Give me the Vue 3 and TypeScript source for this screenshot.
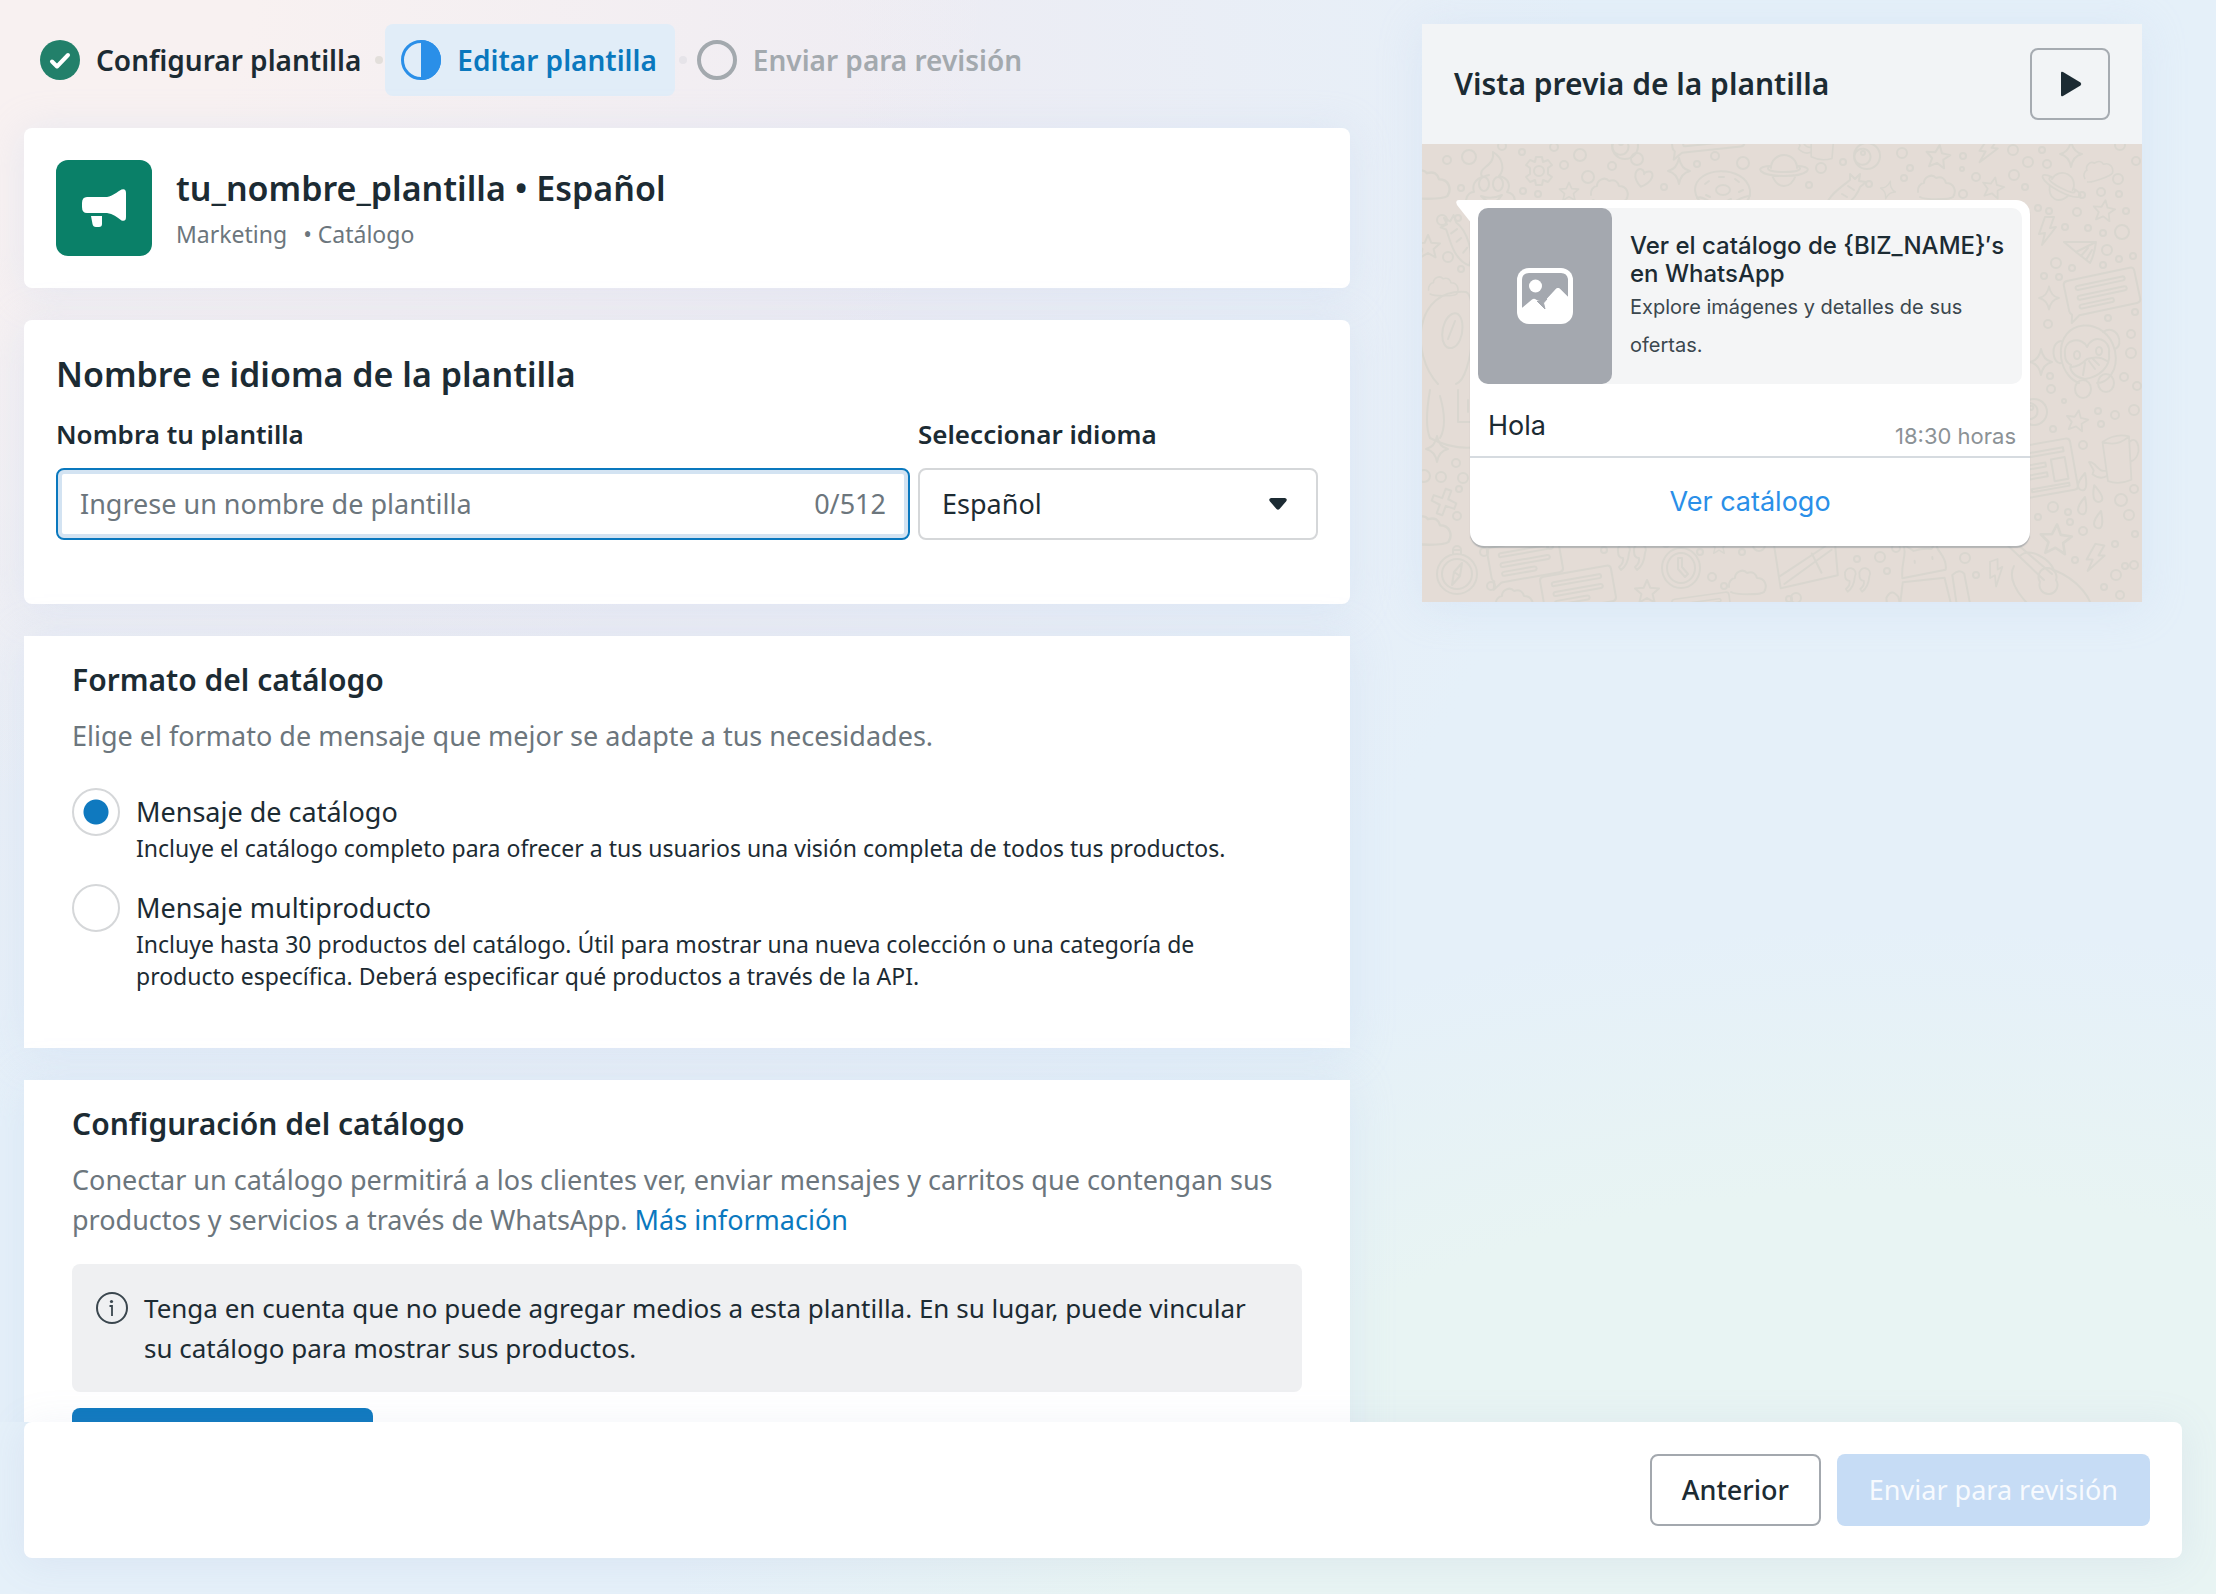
<script setup lang="ts">
import { ref } from 'vue'

type Format = 'catalog' | 'multi'
interface FormatOption { value: Format; label: string; description: string }
interface Doodle { kind: string; x: number; y: number; scale?: number; rotate?: number }

const name = ref('')
const language = ref('es')
const format = ref<Format>('catalog')

const options: FormatOption[] = [
  {
    value: 'catalog',
    label: 'Mensaje de catálogo',
    description: 'Incluye el catálogo completo para ofrecer a tus usuarios una visión completa de todos tus productos.',
  },
  {
    value: 'multi',
    label: 'Mensaje multiproducto',
    description: 'Incluye hasta 30 productos del catálogo. Útil para mostrar una nueva colección o una categoría de producto específica. Deberá especificar qué productos a través de la API.',
  },
]

// Shapes of the chat wallpaper, each drawn around its own origin.
const shapes: Record<string, string> = {
  star: 'M0-12 3.4-4.2 12-3.6 5.6 2 7.6 10.4 0 6-7.6 10.4-5.6 2-12-3.6-3.4-4.2Z',
  sparkle: 'M0-13Q2-2 11 0 2 2 0 13-2 2-11 0-2-2 0-13Z',
  cloud: 'M-18 5C-19 0-15-4-12-4-12-10-4-14 0-9 6-11 9-8 10-4 18-4 21 4 17 10 14 13-12 13-16 10-19 9-18 5Z',
  heart: 'M0 9C-12 1-9-8-4-8-1-8 0-5 0-4 0-5 2-8 5-8 10-8 11 1 0 9Z',
  bolt: 'M-2-14 7-14 3-3 9-4-5 14-2 2-8 3Z',
  planet: 'M-13-3A13 13 0 0 1 13-3M-14-5C-32-4-24 5 0 5 24 5 32-4 14-5M-14-5C-20-1-12 1 0 1 12 1 20-1 14-5M-12 4Q-8 15 0 15 8 15 12 4',
  gear: 'M-3-14H3L4-9 9-11 13-6 9-3V3L13 6 9 11 4 9 3 14H-3L-4 9-9 11-13 6-9 3V-3L-13-6-9-11-4-9ZM-5 0A5 5 0 1 0 5 0 5 5 0 1 0-5 0',
  donut: 'M-28 0C-28-24 22-26 27 0 30 26-26 28-28 0ZM-26 8C-18 4-12 18-2 12 8 18 16 6 27 6M-7 0A7 5 0 1 0 7 0 7 5 0 1 0-7 0M-18-6-14-9M-4-13 1-13M12-11 16-8M16 2 20 0M-17 5-13 7M4 11 8 9',
  poop: 'M-20 24C-30 16-22 8-17 8-20-2-12-6-9-7-14-18 4-16 2-32 12-26 14-14 8-8 18-6 20 2 16 8 26 10 26 22 18 24ZM-12 0A5 7 0 1 0-2 0 5 7 0 1 0-12 0M2 0A5 7 0 1 0 12 0 5 7 0 1 0 2 0M-10 12Q0 16 11 11 2 25-10 12M-9-7-2-9',
  eye: 'M-13 0A13 13 0 1 0 13 0 13 13 0 1 0-13 0M-11-4A8 8 0 1 0 3-2 8 8 0 0 0-11-4M-6-3A2 2 0 1 0-2-3 2 2 0 1 0-6-3',
  bubble: 'M-32-18H32Q36-18 36-14V14Q36 18 32 18H-27L-36 24-34 16Q-36 14-36 12V-14Q-36-18-32-18ZM-25-9Q-25-11-23-11H23Q25-11 25-9T23-7H-23Q-25-7-25-9ZM-25 1Q-25-1-23-1H23Q25-1 25 1T23 3H-23Q-25 3-25 1ZM-25 10Q-25 8-23 8H8Q10 8 10 10T8 12H-23Q-25 12-25 10Z',
  plane: 'M-18-10 14-10Q12 4 8 11L-6 0ZM-6 0 14-10M-1 4 6-4M4 8 10-2',
  comet: 'M-22 20C-22 4-6-6 4-14L4-20 9-15 14-20 13-13 20-12 14-7C10 6-8 20-22 20ZM-12 10-6 12M-4 0 1 3M2-8 8-4',
  compass: 'M-20 0A20 20 0 1 0 20 0 20 20 0 1 0-20 0M-15 0A15 15 0 1 0 15 0 15 15 0 1 0-15 0M5-11-3-2-5 11 3 2ZM-3-2 3 2M-4-20-4-24 4-24 4-20M-4-24A4 4 0 1 1 4-24',
  clock: 'M-19 0A19 20 0 1 0 19 0 19 20 0 1 0-19 0M-14 0A14 15 0 1 0 14 0 14 15 0 1 0-14 0M-3-10V1L4 9 7 6 1-1V-10Z',
  monkey: 'M-26 0C-30-40 20-42 28-6 32 14 20 26 10 26M-26 0C-24 16-14 24-8 26M-26-16C-38-14-34 8-26 6M16-25C30-34 38-12 28-8M-22-2C-24-20-4-20 0-10 6-24 24-18 22-4 24 10 12 20-2 22-14 20-18 12-16 8-20 6-22 2-22-2ZM-13-2A3 4 0 1 0-7-2 3 4 0 1 0-13-2M9-6A3 4 0 1 0 15-6 3 4 0 1 0 9-6M-16 10Q-8 10 0 2 12-2 20 4M-4 18-2 6M2 4 8 12M6 2 12 8M-12 32A8 9 0 1 0 4 32 8 9 0 1 0-12 32M11 26A8 9 0 1 0 27 26 8 9 0 1 0 11 26',
  paper: 'M-28-30H22Q26-30 26-26V18Q26 22 22 22H-34V-8H-28ZM-28-8V16M-20-22H18V-18H-20ZM4-12H18V10H4ZM-20-10H-2V-6H-20ZM-20 0H-2V4H-20ZM-20 14H18V17H-20Z',
  mug: 'M-16-18Q0-26 14-20L10 28Q-4 32-16 26ZM-16-18Q0-10 14-20M14-14C24-22 28 4 12 8M-16 14C-26 16-26 2-34 2L-30 12-32 16Q-24 24-16 20',
  drop: 'M2-9Q5 6 1 8-4 9-5 4-5-1 2-9Z',
  comma: 'M-10-6A6 6 0 1 1 1-4Q0 8-7 13L-9 10Q-4 6-5 1-10 1-10-6ZM6-6A6 6 0 1 1 17-4Q16 8 9 13L7 10Q12 6 11 1 6 1 6-6Z',
  plus: 'M-3-13H3L3-4 12-3V3L3 3V13H-3L-3 4-12 3V-3L-3-3Z',
  astro: 'M-22 50C-50 20-46-46 6-42 18-38 14 44-4 50M-8-20C6-26 6 10-8 14-22 16-20-14-8-20ZM-5-13-12 5M-30 56Q-36 90-30 104 0 120 30 110M-2 56V88H24V72M8 66V78M-20 62Q-12 90-20 104',
  box: 'M-32-30H30V22L-28 30ZM-28 18 20-8M-24 26 26-4M0-30 4-14 12-20M-10-30A9 9 0 0 0 8-30M14 18 6-2',
  android: 'M-32 60-22 16H20L26 60M-22 12C-22-4-14-12-18-22L-8-14Q2-16 10-14L16-22Q14-16 18-10 24 0 22 8ZM-8-4V-2M10-6V-4M-40 60V30Q-34 20-28 30L-24 60M30 60 28 14Q36 8 40 14L44 60',
  spoon: 'M-44-46 0-4M-34-46 8-10M-4-2A9 9 0 1 0 12-4 9 9 0 1 0-4-2M-30-18C-40 0-10 30 4 34M-24-28C-14-38 6-24 10-14 30-6 54 14 48 40',
}

const doodles: Doodle[] = [
  { kind: 'cloud', x: 5, y: 40, scale: 1.2 }, { kind: 'poop', x: 69, y: 40 }, { kind: 'gear', x: 117, y: 27 },
  { kind: 'star', x: 147, y: 48, scale: 0.8 }, { kind: 'cloud', x: 187, y: 46 }, { kind: 'heart', x: 221, y: 34, rotate: 15 },
  { kind: 'sparkle', x: 257, y: 27 }, { kind: 'donut', x: 301, y: 46 }, { kind: 'planet', x: 362, y: 27 },
  { kind: 'eye', x: 203, y: 2 }, { kind: 'comet', x: 424, y: 50 }, { kind: 'eye', x: 445, y: 12 },
  { kind: 'sparkle', x: 466, y: 46, scale: 0.7, rotate: 15 }, { kind: 'star', x: 516, y: 13, rotate: 8 }, { kind: 'cloud', x: 514, y: 43 },
  { kind: 'bolt', x: 566, y: 6, rotate: 15 }, { kind: 'star', x: 571, y: 44, scale: 0.9, rotate: 12 }, { kind: 'sparkle', x: 649, y: 10 },
  { kind: 'planet', x: 639, y: 43, scale: 0.9, rotate: 28 }, { kind: 'cloud', x: 675, y: 26, scale: 0.8, rotate: -20 }, { kind: 'star', x: 682, y: 67, scale: 0.9, rotate: 8 },
  { kind: 'bolt', x: 625, y: 87 }, { kind: 'plane', x: 660, y: 108 }, { kind: 'bubble', x: 680, y: 148, rotate: -12 },
  { kind: 'sparkle', x: 627, y: 154, scale: 0.9 }, { kind: 'cloud', x: 21, y: 142, scale: 0.8 }, { kind: 'comet', x: 36, y: 94, rotate: -70 },
  { kind: 'star', x: 6, y: 103 }, { kind: 'astro', x: 38, y: 190 }, { kind: 'sparkle', x: 15, y: 305 },
  { kind: 'plus', x: 22, y: 358, rotate: 20 }, { kind: 'cloud', x: 6, y: 386, scale: 1.2 }, { kind: 'compass', x: 35, y: 430 },
  { kind: 'bubble', x: 103, y: 416, rotate: -10 }, { kind: 'bubble', x: 156, y: 445, rotate: -10 }, { kind: 'cloud', x: 92, y: 456 },
  { kind: 'comma', x: 206, y: 413 }, { kind: 'star', x: 225, y: 448 }, { kind: 'clock', x: 259, y: 424 },
  { kind: 'star', x: 297, y: 402, scale: 0.7 }, { kind: 'cloud', x: 325, y: 438 }, { kind: 'box', x: 384, y: 412, rotate: -5 },
  { kind: 'comma', x: 432, y: 436, scale: 0.9 }, { kind: 'android', x: 501, y: 420, rotate: -6 }, { kind: 'bolt', x: 574, y: 429, scale: 0.9, rotate: -20 },
  { kind: 'spoon', x: 622, y: 440 }, { kind: 'star', x: 634, y: 396, scale: 1.3, rotate: 4 }, { kind: 'bolt', x: 673, y: 414, rotate: 10 },
  { kind: 'monkey', x: 665, y: 213 }, { kind: 'eye', x: 612, y: 268, rotate: 20 }, { kind: 'sparkle', x: 619, y: 218 },
  { kind: 'star', x: 655, y: 277, scale: 0.9, rotate: 10 }, { kind: 'paper', x: 627, y: 328, rotate: -10 }, { kind: 'mug', x: 697, y: 312, rotate: -8, scale: 0.9 },
  { kind: 'drop', x: 661, y: 338 }, { kind: 'drop', x: 661, y: 362 }, { kind: 'drop', x: 675, y: 350, rotate: -30 }, { kind: 'drop', x: 677, y: 376 },
  { kind: 'bubble', x: 285, y: -12, rotate: -6 }, { kind: 'mug', x: 402, y: -8, scale: 0.8 }, { kind: 'bubble', x: 280, y: 466, rotate: -8, scale: 0.8 },
]

// Loose dots between the shapes: x, y, radius.
const dots: [number, number, number][] = [
  [25, 16, 4], [47, 13, 7], [80, 2, 4], [100, 8, 3], [132, 3, 4], [142, 21, 4], [158, 11, 6], [166, 33, 6], [190, 22, 4], [215, 15, 6],
  [101, 47, 3], [116, 50, 3], [39, 44, 3], [242, 43, 3], [275, 20, 3], [293, 12, 4], [321, 19, 6], [387, 41, 3], [399, 24, 5], [421, 18, 3],
  [447, 40, 3], [480, 9, 5], [482, 34, 3], [488, 24, 3], [541, 12, 3], [591, 6, 5], [606, 18, 5], [592, 31, 5], [554, 33, 4], [603, 43, 3],
  [541, 50, 4], [540, 25, 2], [620, 6, 3], [625, 20, 4], [660, 51, 3], [679, 48, 4], [698, 1, 5], [696, 35, 5], [714, 17, 4], [697, 50, 3],
  [616, 64, 3], [627, 67, 3], [655, 68, 4], [704, 67, 3], [643, 83, 3], [666, 84, 3], [681, 89, 3], [700, 88, 7], [685, 106, 5], [697, 115, 3],
  [634, 119, 5], [650, 124, 3], [622, 132, 3], [637, 133, 3], [681, 121, 3], [711, 112, 3], [686, 174, 3], [626, 180, 4], [713, 168, 3], [709, 190, 4],
  [709, 209, 5], [628, 232, 3], [629, 245, 4], [702, 233, 4], [715, 242, 4], [712, 266, 5], [693, 271, 4], [676, 267, 3], [679, 280, 3], [642, 257, 2],
  [631, 285, 3], [661, 301, 4], [20, 76, 5], [36, 74, 3], [26, 113, 5], [39, 125, 3], [34, 319, 4],
  [19, 333, 5], [41, 334, 5], [2, 332, 6], [37, 345, 3], [35, 372, 4], [62, 408, 4], [69, 442, 4], [60, 398, 4], [182, 406, 3], [278, 408, 3],
  [337, 401, 6], [290, 433, 4], [302, 442, 3], [320, 408, 3], [458, 413, 5], [465, 427, 3], [554, 431, 3], [543, 414, 5], [474, 404, 4], [435, 415, 3],
  [631, 363, 5], [646, 368, 3], [616, 373, 3], [648, 378, 3], [661, 387, 4], [699, 356, 6], [712, 345, 4], [707, 371, 5], [693, 400, 3], [713, 390, 3],
  [653, 416, 3], [694, 431, 5], [703, 422, 3], [712, 421, 4], [682, 443, 3], [698, 451, 4], [374, 454, 5], [367, 455, 3], [244, 400, 3], [128, 402, 3],
]

function place(d: Doodle): string {
  return `translate(${d.x} ${d.y}) rotate(${d.rotate ?? 0}) scale(${d.scale ?? 1})`
}
</script>

<template>
  <div class="app">
    <main class="workspace">
      <div class="editor">
        <nav class="steps" aria-label="Progreso">
          <div class="step done">
            <svg class="step-icon" viewBox="0 0 40 40" aria-hidden="true">
              <circle cx="20" cy="20" r="20" fill="#22806a" />
              <path d="M12 21.500 17 26.500 28 15" fill="none" stroke="#fff" stroke-width="4" stroke-linecap="round" stroke-linejoin="round" />
            </svg>
            <span>Configurar plantilla</span>
          </div>
          <i class="dot"></i>
          <div class="step active" aria-current="step">
            <svg class="step-icon" viewBox="0 0 40 40" aria-hidden="true">
              <circle cx="20" cy="20" r="18.500" fill="none" stroke="#2a8fe8" stroke-width="3" />
              <path d="M20 0A20 20 0 0 1 20 40Z" fill="#2a8fe8" />
            </svg>
            <span>Editar plantilla</span>
          </div>
          <i class="dot faint"></i>
          <div class="step pending">
            <svg class="step-icon" viewBox="0 0 40 40" aria-hidden="true">
              <circle cx="20" cy="20" r="18" fill="none" stroke="#a3a9ae" stroke-width="4" />
            </svg>
            <span>Enviar para revisión</span>
          </div>
        </nav>

        <section class="card identity">
          <svg class="identity-icon" viewBox="0 0 96 96" aria-hidden="true">
            <rect width="96" height="96" rx="12" fill="#0a8068" />
            <path d="M31 37H51C57 36 61 32 65.500 29.500Q70 28 70 33V57Q70 62 65.500 60.500C61 57 57 54 51 53H31Q26 53 26 47V43Q26 37 31 37Z" fill="#fff" />
            <path d="M35 56H46V64Q46 67 43 67H40Q37 67 36.500 64Z" fill="#fff" />
          </svg>
          <div class="identity-text">
            <h1>tu_nombre_plantilla • Español</h1>
            <p><span>Marketing</span><span>• Catálogo</span></p>
          </div>
        </section>

        <section class="card naming">
          <h2 class="big-title">Nombre e idioma de la plantilla</h2>
          <div class="fields">
            <div class="field">
              <label for="template-name">Nombra tu plantilla</label>
              <div class="text-box">
                <input id="template-name" v-model="name" type="text" maxlength="512" placeholder="Ingrese un nombre de plantilla" />
                <span class="counter">{{ name.length }}/512</span>
              </div>
            </div>
            <div class="field">
              <label for="template-language">Seleccionar idioma</label>
              <div class="select-box">
                <select id="template-language" v-model="language">
                  <option value="es">Español</option>
                </select>
                <svg class="caret" viewBox="0 0 18 12" aria-hidden="true">
                  <path d="M2 0H16Q19 1 17 3.500L10.500 11Q9 12.500 7.500 11L1 3.500Q-1 1 2 0Z" fill="#1c2b33" />
                </svg>
              </div>
            </div>
          </div>
        </section>

        <section class="card square">
          <h2>Formato del catálogo</h2>
          <p class="lead">Elige el formato de mensaje que mejor se adapte a tus necesidades.</p>
          <div class="options">
            <label v-for="option in options" :key="option.value" class="option">
              <input v-model="format" type="radio" name="format" :value="option.value" />
              <span class="option-text">
                <span class="option-label">{{ option.label }}</span>
                <span class="option-description">{{ option.description }}</span>
              </span>
            </label>
          </div>
        </section>

        <section class="card square">
          <h2>Configuración del catálogo</h2>
          <p class="lead">
            Conectar un catálogo permitirá a los clientes ver, enviar mensajes y carritos que contengan sus productos y servicios a través de WhatsApp. <a href="#">Más información</a>
          </p>
          <div class="notice">
            <svg class="notice-icon" viewBox="0 0 32 32" aria-hidden="true">
              <circle cx="16" cy="16" r="15" fill="none" stroke="#3a464e" stroke-width="2" />
              <circle cx="15.500" cy="9.500" r="1.600" fill="#3a464e" />
              <path d="M13.500 14H16V24" fill="none" stroke="#3a464e" stroke-width="1.800" />
            </svg>
            <p>Tenga en cuenta que no puede agregar medios a esta plantilla. En su lugar, puede vincular su catálogo para mostrar sus productos.</p>
          </div>
          <button class="connect" type="button" aria-label="Conectar catálogo"></button>
        </section>
      </div>

      <aside class="preview">
        <header class="preview-header">
          <h2>Vista previa de la plantilla</h2>
          <button class="play" type="button" aria-label="Reproducir">
            <svg viewBox="0 0 22 26" aria-hidden="true">
              <path d="M1 2Q1 0 3 1L20.500 11.500Q22 13 20.500 14.500L3 25Q1 26 1 24Z" fill="#1c2b33" />
            </svg>
          </button>
        </header>
        <div class="chat">
          <svg class="wallpaper" viewBox="0 0 720 458" preserveAspectRatio="xMidYMid slice" aria-hidden="true">
            <g fill="none" stroke="#d9d6cf" stroke-width="2" stroke-linejoin="round" stroke-linecap="round">
              <path v-for="(d, i) in doodles" :key="i" :d="shapes[d.kind]" :transform="place(d)" />
              <circle v-for="(c, i) in dots" :key="'c' + i" :cx="c[0]" :cy="c[1]" :r="c[2]" />
            </g>
          </svg>
          <article class="message">
            <svg class="tail" viewBox="0 0 16 24" aria-hidden="true">
              <path d="M16 0H3Q-1 0 1 5L16 24Z" fill="#fff" />
            </svg>
            <div class="product">
              <div class="thumb">
                <svg viewBox="0 0 56 56" aria-hidden="true">
                  <rect width="56" height="56" rx="12" fill="#fff" />
                  <path d="M12 5H44Q50 5 51 11V29L43 21Q41 19 39 21L27 34 19 32 5 40V12Q5 5 12 5Z" fill="#a4a8af" />
                  <circle cx="18.500" cy="18" r="6.500" fill="#fff" />
                  <path d="M5 40 15 31.500Q17 30 19 31.500L25 37 27 34 39 21Q41 19 43 21L51 29V46H5Z" fill="#fff" />
                  <path d="M20 33 28 41 26.500 35 30 31" fill="#a4a8af" stroke="#a4a8af" stroke-width="1" stroke-linejoin="round" />
                </svg>
              </div>
              <div class="product-text">
                <strong>Ver el catálogo de {BIZ_NAME}′s en WhatsApp</strong>
                <p>Explore imágenes y detalles de sus ofertas.</p>
              </div>
            </div>
            <div class="body">
              <span>Hola</span>
              <time datetime="18:30">18:30 horas</time>
            </div>
            <button class="view" type="button">Ver catálogo</button>
          </article>
        </div>
      </aside>
    </main>

    <footer class="actions">
      <button class="back" type="button">Anterior</button>
      <button class="submit" type="button" disabled>Enviar para revisión</button>
    </footer>
  </div>
</template>

<style>
body {
  margin: 0;
}
</style>

<style scoped>
.app,
.app * {
  box-sizing: border-box;
}
.app {
  display: flex;
  flex-direction: column;
  height: 100vh;
  overflow: hidden;
  color: #1c2b33;
  font-family: "Noto Sans", "Open Sans", sans-serif;
  font-size: 27px;
  line-height: 40px;
  background:
    radial-gradient(ellipse 45% 50% at 0% 0%, #f8f1f1 25%, transparent 100%),
    radial-gradient(ellipse 48% 70% at 24% 10%, #eeecf3 30%, transparent 100%),
    radial-gradient(ellipse 55% 42% at 85% 100%, #e8f4f3 60%, transparent 100%),
    #e5f0f9;
}
h1, h2, p {
  margin: 0;
}
h2 {
  font-size: 30px;
  font-weight: 600;
}
button, input, select {
  font: inherit;
  color: inherit;
}
a {
  color: #0a78be;
  text-decoration: none;
}

.workspace {
  flex: 1 1 0;
  min-height: 0;
  overflow: hidden;
  display: grid;
  grid-template-columns: minmax(0, 1326fr) minmax(0, 720fr);
  gap: 72px;
  align-items: start;
  padding: 24px 74px 0 24px;
}
.editor {
  display: flex;
  flex-direction: column;
  gap: 32px;
}

.steps {
  display: flex;
  align-items: center;
  font-size: 28px;
  font-weight: 600;
}
.step {
  display: flex;
  align-items: center;
  gap: 16px;
  height: 72px;
  padding: 0 16px;
  border-radius: 8px;
}
.step-icon {
  width: 40px;
  height: 40px;
}
.done {
  padding-right: 14px;
}
.active {
  padding-right: 18px;
  color: #0a78be;
  background: #e1edf8;
}
.pending {
  color: #a3a9ae;
}
.dot {
  width: 8px;
  height: 8px;
  margin-right: 2px;
  border-radius: 50%;
  background: #e3dfdb;
}
.faint {
  margin-left: 4px;
  margin-right: -6px;
  background: #e6e4e9;
}

.card {
  border-radius: 8px;
  background: #fff;
  box-shadow: 0 4px 40px rgba(190, 208, 238, 0.3);
}
.identity {
  display: flex;
  align-items: center;
  gap: 24px;
  padding: 32px;
}
.identity-icon {
  width: 96px;
  height: 96px;
}
.identity-text {
  display: flex;
  flex-direction: column;
  gap: 8px;
}
.identity-text h1 {
  font-size: 34px;
  font-weight: 600;
  line-height: 44px;
}
.identity-text p {
  display: flex;
  gap: 16px;
  font-size: 23px;
  line-height: 32px;
  color: #6c767d;
}

.naming {
  padding: 32px 32px 64px;
}
.big-title {
  margin-bottom: 18px;
  font-size: 34px;
  line-height: 44px;
}
.fields {
  display: grid;
  grid-template-columns: minmax(0, 854fr) minmax(0, 400fr);
  gap: 8px;
}
.field label {
  display: block;
  margin-bottom: 14px;
  font-size: 26px;
  font-weight: 600;
}
.text-box {
  display: flex;
  align-items: center;
  height: 72px;
  padding: 0 22px;
  border: 2px solid #0a78be;
  border-radius: 8px;
  box-shadow: inset 0 0 0 4px #d3e3f2;
}
.text-box input {
  flex: 1;
  min-width: 0;
  padding: 0;
  border: 0;
  outline: 0;
  background: transparent;
}
.text-box input::placeholder {
  color: #6c767d;
  opacity: 1;
}
.counter {
  color: #6c767d;
}
.select-box {
  display: grid;
  align-items: center;
}
.select-box > * {
  grid-area: 1 / 1;
}
.select-box select {
  width: 100%;
  height: 72px;
  padding: 0 22px;
  border: 2px solid #d5d7d9;
  border-radius: 8px;
  background: #fff;
  appearance: none;
}
.caret {
  justify-self: end;
  width: 18px;
  height: 12px;
  margin-right: 31px;
  pointer-events: none;
}

.square {
  display: flex;
  flex-direction: column;
  padding: 24px 48px 56px;
  border-radius: 0;
}
.lead {
  margin-top: 16px;
  color: #6c767d;
}
.options {
  display: flex;
  flex-direction: column;
  gap: 20px;
  margin-top: 32px;
}
.option {
  display: flex;
  align-items: flex-start;
  gap: 16px;
}
.option input {
  flex: none;
  width: 48px;
  height: 48px;
  margin: 0;
  border: 2px solid #d5d7d9;
  border-radius: 50%;
  appearance: none;
}
.option input:checked {
  background: radial-gradient(circle, #0f79bf 12px, transparent 13px);
}
.option-text {
  display: flex;
  flex-direction: column;
  padding: 4px 32px 0 0;
}
.option-description {
  font-size: 23px;
  line-height: 32px;
}
.notice {
  display: flex;
  align-items: flex-start;
  gap: 16px;
  margin-top: 24px;
  padding: 24px 32px 24px 24px;
  border-radius: 8px;
  background: #eff0f2;
  font-size: 26px;
}
.notice-icon {
  flex: none;
  width: 32px;
  height: 32px;
  margin-top: 4px;
}
.connect {
  width: 301px;
  height: 72px;
  margin-top: 16px;
  border: 0;
  border-radius: 8px;
  background: #0f79bf;
}

.preview {
  box-shadow: 0 4px 40px rgba(190, 208, 238, 0.3);
}
.preview-header {
  display: flex;
  align-items: center;
  justify-content: space-between;
  padding: 24px 32px;
  background: #f2f4f6;
}
.play {
  display: grid;
  place-items: center;
  width: 80px;
  height: 72px;
  padding: 0 0 0 2px;
  border: 2px solid #a6abb1;
  border-radius: 8px;
  background: transparent;
}
.play svg {
  width: 22px;
  height: 26px;
}
.chat {
  position: relative;
  padding: 56px 112px 56px 48px;
  overflow: hidden;
  background: #e4dcd6;
  font-family: Inter, "Noto Sans", sans-serif;
}
.wallpaper {
  position: absolute;
  inset: 0;
  width: 100%;
  height: 100%;
}
.message {
  position: relative;
  padding-top: 8px;
  border-radius: 0 14px 14px 14px;
  background: #fff;
  box-shadow: 0 2px 1px rgba(120, 130, 140, 0.45);
}
.tail {
  position: absolute;
  top: 0;
  left: -14px;
  width: 16px;
  height: 24px;
}
.product {
  display: flex;
  gap: 18px;
  margin: 0 8px;
  border-radius: 10px;
  background: #f4f5f6;
}
.thumb {
  display: grid;
  place-items: center;
  flex: none;
  width: 134px;
  height: 176px;
  border-radius: 10px;
  background: #a4a8af;
}
.thumb svg {
  width: 56px;
  height: 56px;
}
.product-text {
  padding-top: 24px;
}
.product-text strong {
  display: block;
  font-size: 24px;
  font-weight: 500;
  line-height: 28px;
}
.product-text p {
  font-size: 20px;
  line-height: 38px;
  color: #3b474e;
}
.body {
  display: flex;
  align-items: flex-end;
  justify-content: space-between;
  padding: 22px 14px 0 18px;
  height: 74px;
  border-bottom: 2px solid #d6dbe0;
}
.body span {
  align-self: flex-start;
}
.body time {
  font-size: 22px;
  color: #8c9296;
}
.view {
  display: block;
  width: 100%;
  height: 88px;
  padding: 0;
  border: 0;
  border-radius: 0 0 14px 14px;
  background: transparent;
  color: #2a8fe8;
}

.actions {
  position: relative;
  display: flex;
  justify-content: flex-end;
  gap: 16px;
  margin: 0 34px 36px 24px;
  padding: 32px;
  border-radius: 8px;
  background: #fff;
  box-shadow: 0 4px 40px rgba(130, 150, 200, 0.12);
}
.actions button {
  height: 72px;
  padding: 0 32px;
  border-radius: 8px;
}
.actions .back {
  padding: 0 30px;
  border: 2px solid #a3a8ae;
  background: #fff;
  font-weight: 500;
}
.submit {
  border: 0;
  background: #c6dcf5;
  color: #f7fafe;
}
</style>
